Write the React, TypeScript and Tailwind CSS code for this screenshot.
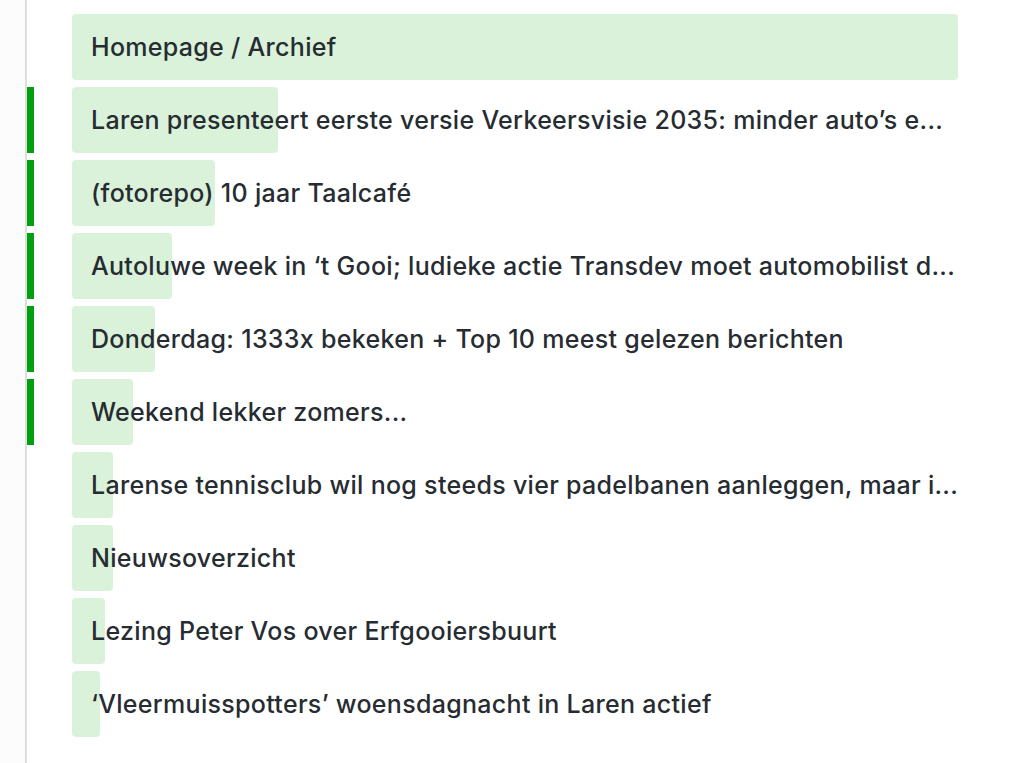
const rows = [
  { title: 'Homepage / Archief', width: 886, active: false },
  { title: 'Laren presenteert eerste versie Verkeersvisie 2035: minder auto’s e...', width: 206, active: true },
  { title: '(fotorepo) 10 jaar Taalcafé', width: 143, active: true },
  { title: 'Autoluwe week in ‘t Gooi; ludieke actie Transdev moet automobilist d...', width: 100, active: true },
  { title: 'Donderdag: 1333x bekeken + Top 10 meest gelezen berichten', width: 83, active: true },
  { title: 'Weekend lekker zomers...', width: 61, active: true },
  { title: 'Larense tennisclub wil nog steeds vier padelbanen aanleggen, maar i...', width: 41, active: false },
  { title: 'Nieuwsoverzicht', width: 41, active: false },
  { title: 'Lezing Peter Vos over Erfgooiersbuurt', width: 33, active: false },
  { title: '‘Vleermuisspotters’ woensdagnacht in Laren actief', width: 28, active: false },
]

export default function App() {
  return (
    <div className="flex min-h-[763px] bg-white font-['Inter',sans-serif]">
      <div className="w-[25px] shrink-0 bg-[#fcfcfc]" />
      <div className="flex-1 border-l-2 border-[#dedede] pt-[14px]">
        <div className="flex flex-col gap-[7px]">
          {rows.map((row, i) => (
            <div key={i} className="flex items-stretch">
              <div className={`w-[7px] shrink-0 ${row.active ? 'bg-[#00a00f]' : ''}`} />
              <div className="relative ml-[38px] h-[66px] w-[886px]">
                <div
                  className="absolute inset-y-0 left-0 rounded bg-[#d9f2d9]"
                  style={{ width: row.width }}
                />
                <div className="relative flex h-full items-center pt-px pl-[19px] pr-[8px]">
                  <span className="whitespace-nowrap text-[25px] font-medium tracking-[0.012em] text-[#262c31]">{row.title}</span>
                </div>
              </div>
            </div>
          ))}
        </div>
      </div>
    </div>
  )
}
